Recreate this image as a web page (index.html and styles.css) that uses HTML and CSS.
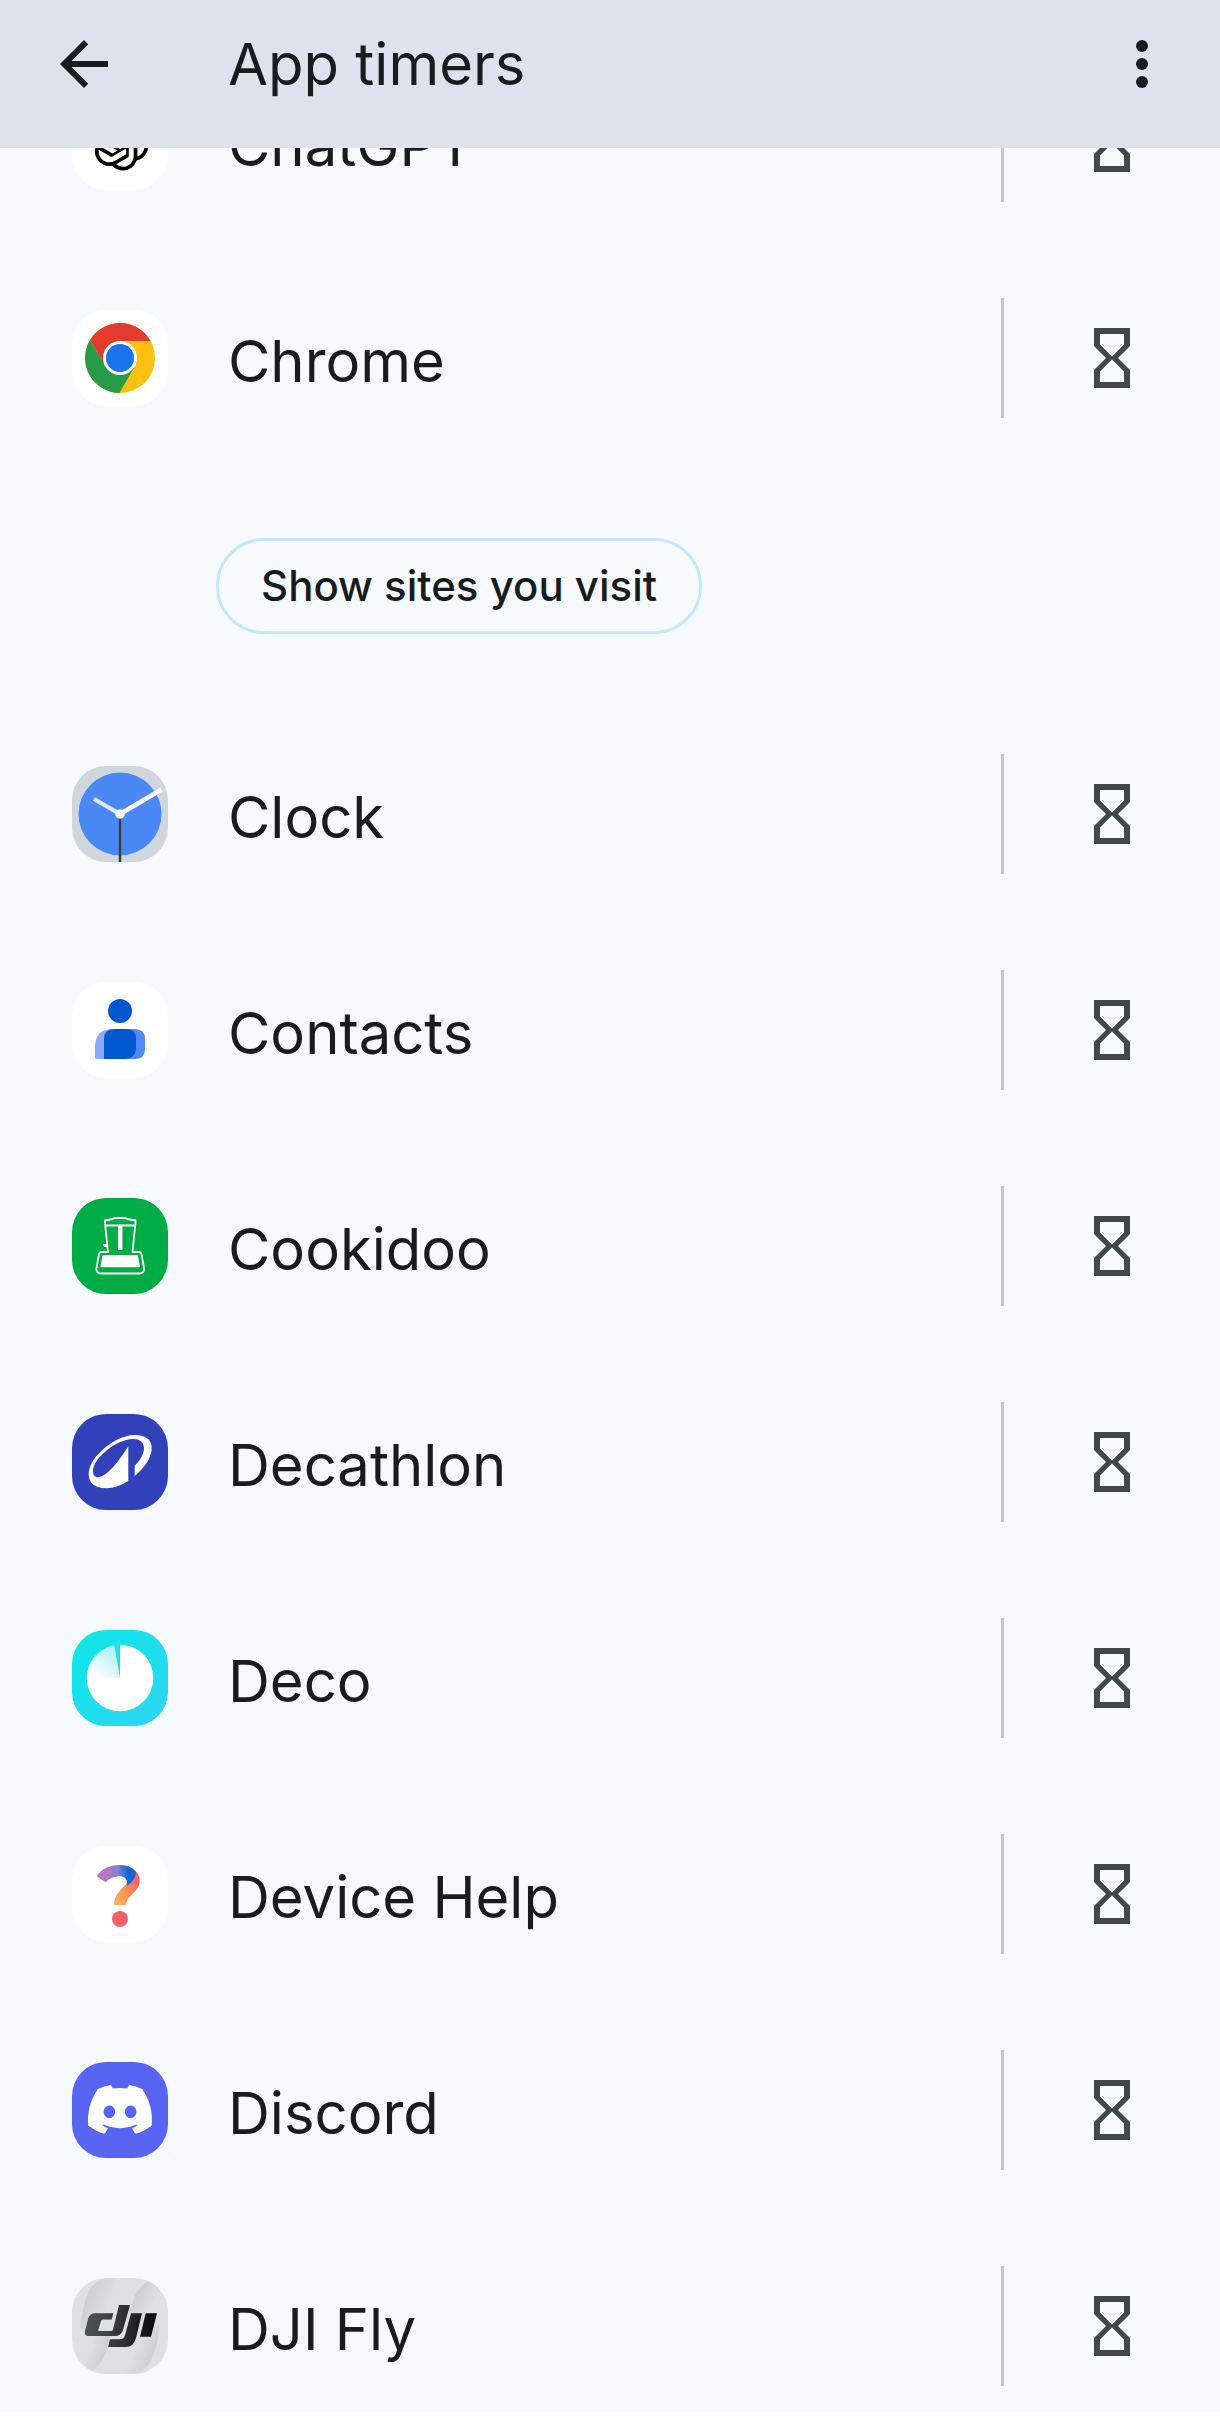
FILE: index.html
```html
<!DOCTYPE html>
<html lang="en">
<head>
<meta charset="utf-8">
<meta name="viewport" content="width=device-width">
<title>App timers</title>
<link rel="stylesheet" href="styles.css">
</head>
<body>
<svg class="defs" aria-hidden="true">
  <symbol id="hourglass" viewBox="0 0 24 24"><path fill="currentColor" d="M6 2v6l4 4-4 4v6h12v-6l-4-4 4-4V2H6zm10 14.500V20H8v-3.500l4-4 4 4zm-4-5l-4-4V4h8v3.500l-4 4z"/></symbol>
</svg>
<div class="screen">
  <header class="app-bar">
    <button class="icon-button" type="button" aria-label="Back">
      <svg class="glyph" viewBox="0 0 24 24"><path fill="currentColor" d="M20 11H7.830l5.590-5.590L12 4l-8 8 8 8 1.410-1.410L7.830 13H20v-2z"/></svg>
    </button>
    <h1 class="title">App timers</h1>
    <button class="icon-button" type="button" aria-label="More options">
      <svg class="glyph" viewBox="0 0 24 24" fill="currentColor"><circle cx="12" cy="6" r="2"/><circle cx="12" cy="12" r="2"/><circle cx="12" cy="18" r="2"/></svg>
    </button>
  </header>

  <main class="content">
    <ul class="app-list">
      <li class="app">
        <svg class="app-icon" viewBox="0 0 96 96"><rect width="96" height="96" fill="#fff"/><g transform="translate(19.500 19.500) scale(2.375)"><path d="M22.2819 9.8211a5.9847 5.9847 0 0 0-.5157-4.9108 6.0462 6.0462 0 0 0-6.5098-2.9A6.0651 6.0651 0 0 0 4.9807 4.1818a5.9847 5.9847 0 0 0-3.9977 2.9 6.0462 6.0462 0 0 0 .7427 7.0966 5.98 5.98 0 0 0 .511 4.9107 6.051 6.051 0 0 0 6.5146 2.9001A5.9847 5.9847 0 0 0 13.2599 24a6.0557 6.0557 0 0 0 5.7718-4.2058 5.9894 5.9894 0 0 0 3.9977-2.9001 6.0557 6.0557 0 0 0-.7475-7.0729zm-9.022 12.6081a4.4755 4.4755 0 0 1-2.8764-1.0408l.1419-.0804 4.7783-2.7582a.7948.7948 0 0 0 .3927-.6813v-6.7369l2.02 1.1686a.071.071 0 0 1 .038.052v5.5826a4.504 4.504 0 0 1-4.4945 4.4944zm-9.6607-4.1254a4.4708 4.4708 0 0 1-.5346-3.0137l.142.0852 4.783 2.7582a.7712.7712 0 0 0 .7806 0l5.8428-3.3685v2.3324a.0804.0804 0 0 1-.0332.0615L9.74 19.9502a4.4992 4.4992 0 0 1-6.1408-1.6464zM2.3408 7.8956a4.485 4.485 0 0 1 2.3655-1.9728V11.6a.7664.7664 0 0 0 .3879.6765l5.8144 3.3543-2.0201 1.1685a.0757.0757 0 0 1-.071 0l-4.8303-2.7865A4.504 4.504 0 0 1 2.3408 7.872zm16.5963 3.8558L13.1038 8.364 15.1192 7.2a.0757.0757 0 0 1 .071 0l4.8303 2.7913a4.4944 4.4944 0 0 1-.6765 8.1042v-5.6772a.79.79 0 0 0-.407-.667zm2.0107-3.0231l-.142-.0852-4.7735-2.7818a.7759.7759 0 0 0-.7854 0L9.409 9.2297V6.8974a.0662.0662 0 0 1 .0284-.0615l4.8303-2.7866a4.4992 4.4992 0 0 1 6.6802 4.66zM8.3065 12.863l-2.02-1.1638a.0804.0804 0 0 1-.038-.0567V6.0742a4.4992 4.4992 0 0 1 7.3757-3.4537l-.142.0805L8.704 5.459a.7948.7948 0 0 0-.3927.6813zm1.0976-2.3654l2.602-1.4998 2.6069 1.4998v2.9994l-2.5974 1.4997-2.6067-1.4997Z"/></g></svg>
        <span class="name">ChatGPT</span>
        <button class="timer" type="button" aria-label="Set timer for ChatGPT"><svg class="glyph"><use href="#hourglass"/></svg></button>
      </li>
      <li class="app">
        <svg class="app-icon" viewBox="0 0 96 96"><rect width="96" height="96" fill="#fff"/><g transform="translate(48 48)"><circle r="35" fill="#fcc010"/><path fill="#e33b2e" d="M-30-18A35 35 0 0 1 30.600-17H0L-14.700 8.500z"/><path fill="#269b48" d="M-30-18L-14.700 8.500h29.400L-.6 35A35 35 0 0 1-30-18z"/><circle r="17" fill="#fff"/><circle r="14" fill="#1a73e8"/></g></svg>
        <span class="name">Chrome</span>
        <button class="timer" type="button" aria-label="Set timer for Chrome"><svg class="glyph"><use href="#hourglass"/></svg></button>
      </li>
      <li class="sites"><button class="pill" type="button">Show sites you visit</button></li>
      <li class="app">
        <svg class="app-icon" viewBox="0 0 96 96"><rect width="96" height="96" fill="#cfd7dc"/><circle cx="48" cy="48" r="41.500" fill="#4a88f5"/><path d="M48 48v48" stroke="#3c4043" stroke-width="2.500"/><path d="M48 48L22 33" stroke="#e3e9f3" stroke-width="4"/><path d="M48 48L89.500 23.500" stroke="#fff" stroke-width="4.500"/><circle cx="48" cy="48" r="4.700" fill="#fff"/></svg>
        <span class="name">Clock</span>
        <button class="timer" type="button" aria-label="Set timer for Clock"><svg class="glyph"><use href="#hourglass"/></svg></button>
      </li>
      <li class="app">
        <svg class="app-icon" viewBox="0 0 96 96"><rect width="96" height="96" fill="#fff"/><circle cx="48" cy="29" r="12" fill="#0057d0"/><path fill="#8caafa" d="M41 47h8v30H25q-2 0-2-2V65q0-18 18-18z"/><path fill="#4f8af7" d="M48 47h15q10 0 10 10v10q0 10-10 10H48z"/><path fill="#0057d0" d="M42 47h12q10 0 10 10v8q0 12-12 12H32V57q0-10 10-10z"/></svg>
        <span class="name">Contacts</span>
        <button class="timer" type="button" aria-label="Set timer for Contacts"><svg class="glyph"><use href="#hourglass"/></svg></button>
      </li>
      <li class="app">
        <svg class="app-icon" viewBox="0 0 96 96"><rect width="96" height="96" fill="#00ac46"/><g fill="none" stroke="#fff" stroke-width="1.800" stroke-linejoin="round"><path d="M36 54L33 25v-2.500l8-1.500 1.500-1h11l1.500 1 8.500 1.500V25L60.500 54H67q2 0 2.500 2l2.500 14q.5 5-4 5.500H28.500q-4.500-.5-4-5.500l2.500-14q.5-2 2.500-2z"/><path d="M33 27.500h31"/></g><path fill="#fff" d="M46 28h4.500v24H46zM30.500 57h35.200l2.500 12.300H28.300zM31 46h4v3h-3z"/></svg>
        <span class="name">Cookidoo</span>
        <button class="timer" type="button" aria-label="Set timer for Cookidoo"><svg class="glyph"><use href="#hourglass"/></svg></button>
      </li>
      <li class="app">
        <svg class="app-icon" viewBox="0 0 96 96"><rect width="96" height="96" fill="#3241ba"/><path fill="#fff" d="M62.700 62V51.700C68 47 72 40 72 34c0-6-5-9.500-11-9-9 .5-19 5-27 12-8 6.500-13 14-13 20 0 4 2 6.500 5 6.300C36 62 47 47 56.300 32.300V67C49 71.500 42 74.300 34.700 74.300 23 74.500 16.700 69 16.700 60c0-7 4-14 10-20.500C36.500 29 51 21 63 21c11 0 16.700 5 16.700 13 0 9-7 20-17 28z"/></svg>
        <span class="name">Decathlon</span>
        <button class="timer" type="button" aria-label="Set timer for Decathlon"><svg class="glyph"><use href="#hourglass"/></svg></button>
      </li>
      <li class="app">
        <svg class="app-icon" viewBox="0 0 96 96"><defs><linearGradient id="deco-bg" x2="1" y2="1"><stop stop-color="#0be8e4"/><stop offset="1" stop-color="#30d4f4"/></linearGradient><linearGradient id="deco-fan" x1="0.300" y1="1" x2="1" y2="0"><stop stop-color="#fff"/><stop offset="1" stop-color="#a5eef6"/></linearGradient></defs><rect width="96" height="96" fill="url(#deco-bg)"/><path fill="#fff" d="M48 48V14.700A33.300 33.300 0 1 1 14.700 48z"/><path fill="url(#deco-fan)" d="M48 48H14.700A33.300 33.300 0 0 1 40.500 15.600Q43 16 43 19z"/></svg>
        <span class="name">Deco</span>
        <button class="timer" type="button" aria-label="Set timer for Deco"><svg class="glyph"><use href="#hourglass"/></svg></button>
      </li>
      <li class="app">
        <svg class="app-icon" viewBox="0 0 96 96"><defs><linearGradient id="help-top"><stop offset=".3" stop-color="#b877c4"/><stop offset=".55" stop-color="#7880d0"/><stop offset=".8" stop-color="#1565d8"/></linearGradient><linearGradient id="help-stem" x1="1" y1="0" x2="0.200" y2="1"><stop offset=".2" stop-color="#f5606a"/><stop offset=".55" stop-color="#f98c48"/><stop offset="1" stop-color="#fdb168"/></linearGradient></defs><rect width="96" height="96" fill="#fff"/><path fill="url(#help-stem)" d="M64 25.500Q67.700 29 67.700 35c0 11-13 14-13.700 24H42c0-12 8-15 13-22z"/><path fill="url(#help-top)" d="M24.700 30.300C30 22 39 19 47.300 19c7 0 13 2 16.700 6.500 0 6-4 11-9 14.500 1-6-2-9.700-7-9.700-6 0-11 2.500-14.300 6z"/><circle cx="48" cy="73" r="8" fill="#f5606a"/></svg>
        <span class="name">Device Help</span>
        <button class="timer" type="button" aria-label="Set timer for Device Help"><svg class="glyph"><use href="#hourglass"/></svg></button>
      </li>
      <li class="app">
        <svg class="app-icon" viewBox="0 0 96 96"><rect width="96" height="96" fill="#5865f2"/><g transform="translate(16 15.400) scale(2.667)"><path fill="#fff" d="M20.317 4.3698a19.7913 19.7913 0 00-4.8851-1.5152.0741.0741 0 00-.0785.0371c-.211.3753-.4447.8648-.6083 1.2495-1.8447-.2762-3.68-.2762-5.4868 0-.1636-.3933-.4058-.8742-.6177-1.2495a.077.077 0 00-.0785-.037 19.7363 19.7363 0 00-4.8852 1.515.0699.0699 0 00-.0321.0277C.5334 9.0458-.319 13.5799.0992 18.0578a.0824.0824 0 00.0312.0561c2.0528 1.5076 4.0413 2.4228 5.9929 3.0294a.0777.0777 0 00.0842-.0276c.4616-.6304.8731-1.2952 1.226-1.9942a.076.076 0 00-.0416-.1057c-.6528-.2476-1.2743-.5495-1.8722-.8923a.077.077 0 01-.0076-.1277c.1258-.0943.2517-.1923.3718-.2914a.0743.0743 0 01.0776-.0105c3.9278 1.7933 8.18 1.7933 12.0614 0a.0739.0739 0 01.0785.0095c.1202.099.246.1981.3728.2924a.077.077 0 01-.0066.1276 12.2986 12.2986 0 01-1.873.8914.0766.0766 0 00-.0407.1067c.3604.698.7719 1.3628 1.225 1.9932a.076.076 0 00.0842.0286c1.961-.6067 3.9495-1.5219 6.0023-3.0294a.077.077 0 00.0313-.0552c.5004-5.177-.8382-9.6739-3.5485-13.6604a.061.061 0 00-.0312-.0286zM8.02 15.3312c-1.1825 0-2.1569-1.0857-2.1569-2.419 0-1.3332.9555-2.4189 2.157-2.4189 1.2108 0 2.1757 1.0952 2.1568 2.419 0 1.3332-.9555 2.4189-2.1569 2.4189zm7.9748 0c-1.1825 0-2.1569-1.0857-2.1569-2.419 0-1.3332.9554-2.4189 2.1569-2.4189 1.2108 0 2.1757 1.0952 2.1568 2.419 0 1.3332-.946 2.4189-2.1568 2.4189Z"/></g></svg>
        <span class="name">Discord</span>
        <button class="timer" type="button" aria-label="Set timer for Discord"><svg class="glyph"><use href="#hourglass"/></svg></button>
      </li>
      <li class="app">
        <svg class="app-icon" viewBox="0 0 96 96"><defs><linearGradient id="dji-wave" x2="1" y2="0.600"><stop stop-color="#bfc3c9"/><stop offset=".7" stop-color="#dde1e5"/></linearGradient><linearGradient id="dji-wave-end" x1="1" y1="1" x2="0" y2="0.400"><stop stop-color="#bfc3c9"/><stop offset=".7" stop-color="#dde1e5"/></linearGradient><linearGradient id="dji-mark"><stop stop-color="#50555a"/><stop offset=".5" stop-color="#303438"/><stop offset="1" stop-color="#08090a"/></linearGradient></defs><rect width="96" height="96" fill="#dde1e5"/><path fill="url(#dji-wave)" d="M36 0C22 2 15 12 12 28L5 64l35-18L50 0z"/><path fill="url(#dji-wave)" d="M80 2C68 6 62 16 60 28l-6 26 42-14V0z"/><path fill="url(#dji-wave-end)" d="M18 94c12-6 16-18 20-36L6 50v44z"/><path fill="url(#dji-wave-end)" d="M60 96c16-2 22-16 26-36l2-14-38 14v36z"/><path fill="url(#dji-mark)" d="M47 27h11l-7 25q-2 6-8 6H16q-4 0-3-5l3-12q1.500-5.700 7-5.700h18.300l-1.600 6.200H31q-1.500 0-2 1.500L26.300 52q-.3 1 .7 1h12q1.500 0 2-1.500zM59 35.300h11L64 60q-2.500 9-10 9H36l2-7.700h10q4 0 5-4zM73.700 35.300H85l-6 23.400H68z"/></svg>
        <span class="name">DJI Fly</span>
        <button class="timer" type="button" aria-label="Set timer for DJI Fly"><svg class="glyph"><use href="#hourglass"/></svg></button>
      </li>
    </ul>
  </main>
</div>
</body>
</html>
```
FILE: styles.css
```css
* { box-sizing: border-box; }

body {
  margin: 0;
  background: #fff;
  color: #191c1e;
  font-family: Inter, Roboto, sans-serif;
}

button {
  padding: 0;
  border: 0;
  background: none;
  color: inherit;
  font: inherit;
  cursor: pointer;
}

.defs {
  display: none;
}

.screen {
  display: flex;
  flex-direction: column;
  height: 100vh;
  padding-bottom: 12px;
}

.app-bar {
  z-index: 1;
  display: flex;
  flex: none;
  align-items: center;
  padding: 28px 42px 48px 48px;
  background: #dce3eb;
}

.icon-button {
  display: flex;
}

.glyph {
  display: block;
  width: 72px;
  height: 72px;
}

.title {
  flex: 1;
  margin: 0 0 0 108px;
  font-size: 58px;
  font-weight: 400;
  line-height: 72px;
}

.content {
  flex: 1;
  min-height: 0;
  overflow: hidden;
  background: #f6faff;
}

/* The list is scrolled part of the way past its first entry. */
.app-list {
  margin: -114px 0 0;
  padding: 0;
  list-style: none;
}

.app {
  display: flex;
  align-items: center;
  gap: 60px;
  height: 216px;
  padding-left: 72px;
}

.app-icon {
  flex: none;
  width: 96px;
  height: 96px;
  border-radius: 34px;
}

.name {
  flex: 1;
  padding-top: 6px;
  font-size: 58px;
  line-height: 72px;
}

.timer {
  display: flex;
  align-items: center;
  justify-content: center;
  width: 219px;
  height: 120px;
  border-left: 3px solid #c9c5c0;
  color: #41484d;
}

.sites {
  padding: 72px 216px;
}

.pill {
  display: block;
  height: 96px;
  padding: 0 42px;
  border: 3px solid #c2e7ff;
  border-radius: 48px;
  font-size: 42px;
  font-weight: 500;
  line-height: 48px;
  white-space: nowrap;
}
```
